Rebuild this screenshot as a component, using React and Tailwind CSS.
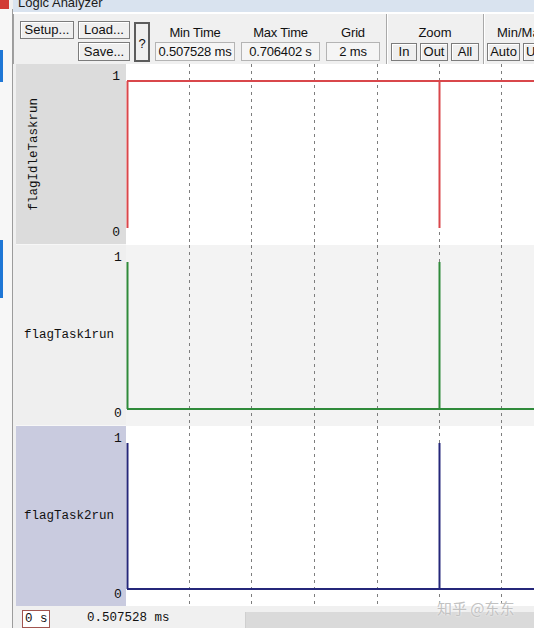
import React from 'react'

// grid columns inside the plot, in px from the plot's left edge
const GRID = [63, 125, 188, 251, 313, 375]
const EDGE = 313

const signals = [
  { name: 'flagIdleTaskrun', vertical: true, labelBg: 'bg-[#dcdcdc]', plotBg: 'bg-white', h: 'h-[181px]', height: 181, color: '#d9474b', level: 'high' },
  { name: 'flagTask1run', labelBg: 'bg-[#efefef]', plotBg: 'bg-[#f3f3f3]', h: 'h-[181px]', height: 181, color: '#2f8a3a', level: 'low' },
  { name: 'flagTask2run', labelBg: 'bg-[#c9cbdf]', plotBg: 'bg-white', h: 'h-[180px]', height: 180, color: '#25277a', level: 'low' },
]

function Btn({ children, className = '' }) {
  return (
    <div className={`flex shrink-0 items-center justify-center whitespace-nowrap border border-[#7c7c7c] bg-[#efefef] shadow-[inset_1px_1px_0_#ffffff] leading-none ${className}`}>
      {children}
    </div>
  )
}

function Field({ label, value, className }) {
  return (
    <div className={`flex shrink-0 flex-col whitespace-nowrap tracking-[-0.2px] ${className}`}>
      <div className="flex h-[21px] items-center justify-center pt-[2px]">{label}</div>
      <div className="flex h-[19px] items-center justify-center border border-[#b4b4b4] bg-[#f5f5f5] leading-none">{value}</div>
    </div>
  )
}

function Separator() {
  return <div className="-mt-[7px] h-[51px] w-[2px] border-l border-[#a9a9a9] bg-white" />
}

function Toolbar() {
  return (
    <div className="flex h-[51px] items-start overflow-hidden border-l border-[#a0a0a0] pl-[6px] pt-[7px]">
      <div className="grid shrink-0 grid-cols-[54px_52px] gap-x-[4px] gap-y-[3px]">
        <Btn className="h-[18px]">Setup...</Btn>
        <Btn className="h-[18px]">Load...</Btn>
        <div />
        <Btn className="h-[19px]">Save...</Btn>
      </div>
      <div className="ml-[4px] mt-[1px] flex h-[40px] w-[16px] shrink-0 items-center justify-center border-2 border-[#5c5c5c] bg-[#efefef] pt-[4px]">?</div>
      <Field label="Min Time" value="0.507528 ms" className="ml-[5px] w-[80px]" />
      <Field label="Max Time" value="0.706402 s" className="ml-[6px] w-[79px]" />
      <Field label="Grid" value="2 ms" className="ml-[6px] w-[54px]" />
      <div className="ml-[6px] shrink-0"><Separator /></div>
      <div className="ml-[3px] flex shrink-0 flex-col">
        <div className="flex h-[22px] items-center justify-center pt-[2px]">Zoom</div>
        <div className="flex gap-[3px]">
          <Btn className="h-[18px] w-[26px]">In</Btn>
          <Btn className="h-[18px] w-[28px]">Out</Btn>
          <Btn className="h-[18px] w-[28px]">All</Btn>
        </div>
      </div>
      <div className="ml-[4px] shrink-0"><Separator /></div>
      <div className="ml-[2px] flex shrink-0 flex-col">
        <div className="flex h-[22px] items-center whitespace-nowrap pl-[10px] pt-[2px]">Min/Max</div>
        <div className="flex gap-[3px]">
          <Btn className="h-[18px] w-[33px]">Auto</Btn>
          <Btn className="h-[18px] w-[28px] justify-start pl-[2px]">Undo</Btn>
        </div>
      </div>
    </div>
  )
}

function Trace({ height, color, level }) {
  const hi = 17
  const lo = height - 17
  return (
    <svg width="408" height={height} className="block">
      {GRID.map(x => (
        <line key={x} x1={x + 0.5} y1="0" x2={x + 0.5} y2={height} stroke="#7d7d7d" strokeWidth="1" strokeDasharray="3 4" />
      ))}
      <line x1="1.5" y1={hi} x2="1.5" y2={lo} stroke={color} strokeWidth="2" />
      <line x1={EDGE + 0.5} y1={hi} x2={EDGE + 0.5} y2={lo} stroke={color} strokeWidth="2" />
      {level === 'high'
        ? <line x1="1" y1={hi} x2="408" y2={hi} stroke={color} strokeWidth="2" />
        : <line x1="1" y1={lo} x2="408" y2={lo} stroke={color} strokeWidth="2" />}
    </svg>
  )
}

function SignalRow({ s, last }) {
  return (
    <div className={`flex ${s.h}`}>
      <div className={`flex w-[110px] shrink-0 ${s.labelBg} ${last ? '' : 'border-b border-[#f7f7f7]'} font-['Liberation_Mono',monospace] text-[12.5px]`}>
        <div className={`flex flex-1 items-center ${s.vertical ? 'pl-[11px]' : 'pl-[8px]'}`}>
          {s.vertical
            ? <span className="rotate-180 leading-[14px] [writing-mode:vertical-rl]">{s.name}</span>
            : <span className="leading-none">{s.name}</span>}
        </div>
        <div className="flex flex-col items-end justify-between pb-[4px] pr-[6px] pt-[5px] text-[13px] leading-[15px]">
          <span>1</span>
          <span>0</span>
        </div>
      </div>
      <div className={`flex-1 ${s.plotBg}`}>
        <Trace height={s.height} color={s.color} level={s.level} />
      </div>
    </div>
  )
}

export default function App() {
  return (
    <div className="flex h-[628px] w-[534px] overflow-hidden bg-[#f0f0f0] font-['Liberation_Sans',sans-serif] text-[13px] text-[#111]">
      {/* neighbouring window edge */}
      <div className="flex w-[13px] shrink-0 flex-col">
        <div className="h-[9px] w-[9px] bg-[#d23a34]" />
        <div className="flex flex-1 flex-col border-r border-[#9c9c9c] bg-[#f7f7f7]">
          <div className="mt-[41px] h-[32px] w-[3px] bg-[#1f77d6]" />
          <div className="mt-[158px] h-[58px] w-[3px] bg-[#1f77d6]" />
        </div>
      </div>

      <div className="relative flex min-w-0 flex-1 flex-col">
        <div className="h-[12px] overflow-hidden bg-[#d9e3ef] pl-[5px]">
          <div className="-mt-[5px] text-[13px] leading-[16px] text-[#1b1b1b]">Logic Analyzer</div>
        </div>
        <div className="h-[2px] bg-white" />
        <Toolbar />

        <div className="flex flex-col pl-[3px]">
          {signals.map((s, i) => (
            <SignalRow key={s.name} s={s} last={i === signals.length - 1} />
          ))}
        </div>

        <div className="flex flex-1 pl-[3px]">
          <div className="flex flex-1 items-start pt-[4px] font-['Liberation_Mono',monospace] text-[12.5px] leading-none">
            <div className="ml-[6px] flex h-[18px] w-[28px] items-center border border-[#a2554f] bg-white pl-[2px]">0 s</div>
            <div className="ml-[37px] pt-[2px]">0.507528 ms</div>
          </div>
          <div className="mt-[6px] w-[289px] border-l border-[#cfcfcf] bg-[#dadada]" />
        </div>

        <div className="absolute left-[424px] top-[597px] font-['Noto_Sans_CJK_SC',sans-serif] text-[15px] text-[#c2c2c2] [text-shadow:0_0_2px_#ffffff]">
          知乎 @东东
        </div>
      </div>
    </div>
  )
}
